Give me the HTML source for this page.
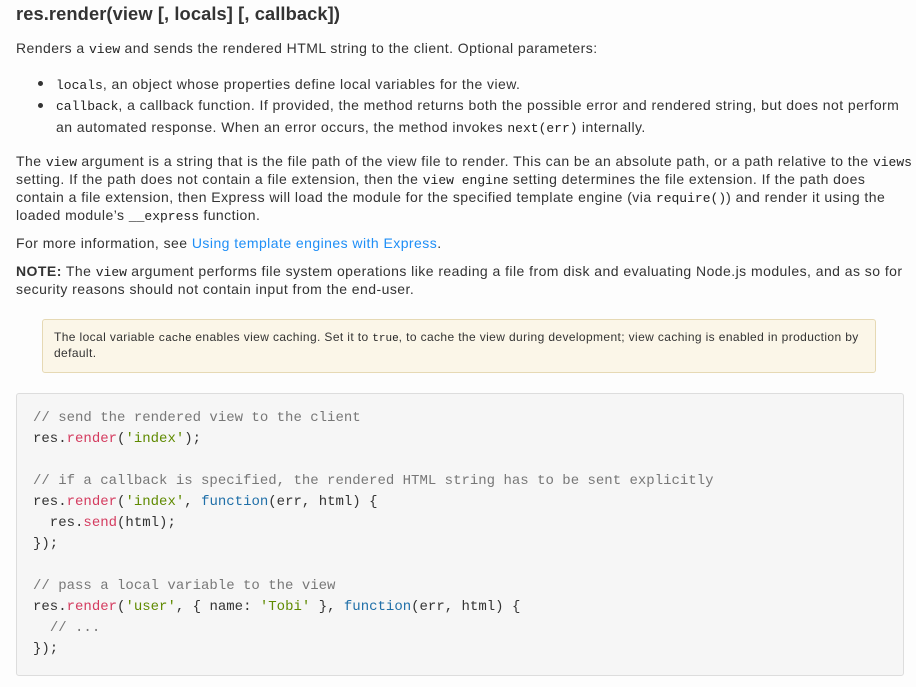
<!DOCTYPE html>
<html><head><meta charset="utf-8"><style>
body{margin:0;width:916px;height:687px;background:#fdfdfd;font-family:"Liberation Sans",sans-serif;color:#333;font-size:14px;position:relative;overflow:hidden}
.a{position:absolute;white-space:nowrap;letter-spacing:0.45px}
code{font-family:"Liberation Mono",monospace;font-size:13px;color:#222;letter-spacing:0}
h1{position:absolute;left:16px;top:0;margin:0;font-size:18.3px;font-weight:bold;color:#333;line-height:28px;letter-spacing:0.1px}
.dot{position:absolute;left:38px;width:5px;height:5px;border-radius:50%;background:#333}
a{color:#1e8ef6;text-decoration:none}
.note{position:absolute;left:42px;top:319px;width:832px;height:52px;background:#fbf6e8;border:1px solid #e6d9b4;border-radius:3px}
.note .t{position:absolute;left:11px;font-size:12px;white-space:nowrap;letter-spacing:0.38px}
.code{position:absolute;left:16px;top:393px;width:886px;height:281px;background:#f6f6f6;border:1px solid #ddd;border-radius:3px}
pre{position:absolute;left:16px;top:14px;margin:0;font-family:"Liberation Mono",monospace;font-size:14px;line-height:21px;color:#333}
.c{color:#777}.r{color:#d43b5f}.s{color:#5f8a00}.k{color:#1f6fa8}
</style></head><body>
<h1>res.render(view [, locals] [, callback])</h1>
<div class="a" style="left:16px;top:40px">Renders a <code>view</code> and sends the rendered HTML string to the client. Optional parameters:</div>
<div class="dot" style="top:81px"></div>
<div class="a" style="left:56px;top:76px"><code>locals</code>, an object whose properties define local variables for the view.</div>
<div class="dot" style="top:103px"></div>
<div class="a" style="left:56px;top:97px"><code>callback</code>, a callback function. If provided, the method returns both the possible error and rendered string, but does not perform</div>
<div class="a" style="left:56px;top:119px">an automated response. When an error occurs, the method invokes <code>next(err)</code> internally.</div>
<div class="a" style="left:16px;top:153px">The <code>view</code> argument is a string that is the file path of the view file to render. This can be an absolute path, or a path relative to the <code>views</code></div>
<div class="a" style="left:16px;top:171px">setting. If the path does not contain a file extension, then the <code>view engine</code> setting determines the file extension. If the path does</div>
<div class="a" style="left:16px;top:189px">contain a file extension, then Express will load the module for the specified template engine (via <code>require()</code>) and render it using the</div>
<div class="a" style="left:16px;top:207px">loaded module’s <code>__express</code> function.</div>
<div class="a" style="left:16px;top:235px">For more information, see <a>Using template engines with Express</a>.</div>
<div class="a" style="left:16px;top:263px"><b>NOTE:</b> The <code>view</code> argument performs file system operations like reading a file from disk and evaluating Node.js modules, and as so for</div>
<div class="a" style="left:16px;top:281px">security reasons should not contain input from the end-user.</div>
<div class="note">
<div class="t" style="top:10px">The local variable <code style="font-size:11px">cache</code> enables view caching. Set it to <code style="font-size:11px">true</code>, to cache the view during development; view caching is enabled in production by</div>
<div class="t" style="top:26px">default.</div>
</div>
<div class="code"><pre><span class="c">// send the rendered view to the client</span>
res.<span class="r">render</span>(<span class="s">'index'</span>);

<span class="c">// if a callback is specified, the rendered HTML string has to be sent explicitly</span>
res.<span class="r">render</span>(<span class="s">'index'</span>, <span class="k">function</span>(err, html) {
  res.<span class="r">send</span>(html);
});

<span class="c">// pass a local variable to the view</span>
res.<span class="r">render</span>(<span class="s">'user'</span>, { name: <span class="s">'Tobi'</span> }, <span class="k">function</span>(err, html) {
  <span class="c">// ...</span>
});</pre></div>
</body></html>
